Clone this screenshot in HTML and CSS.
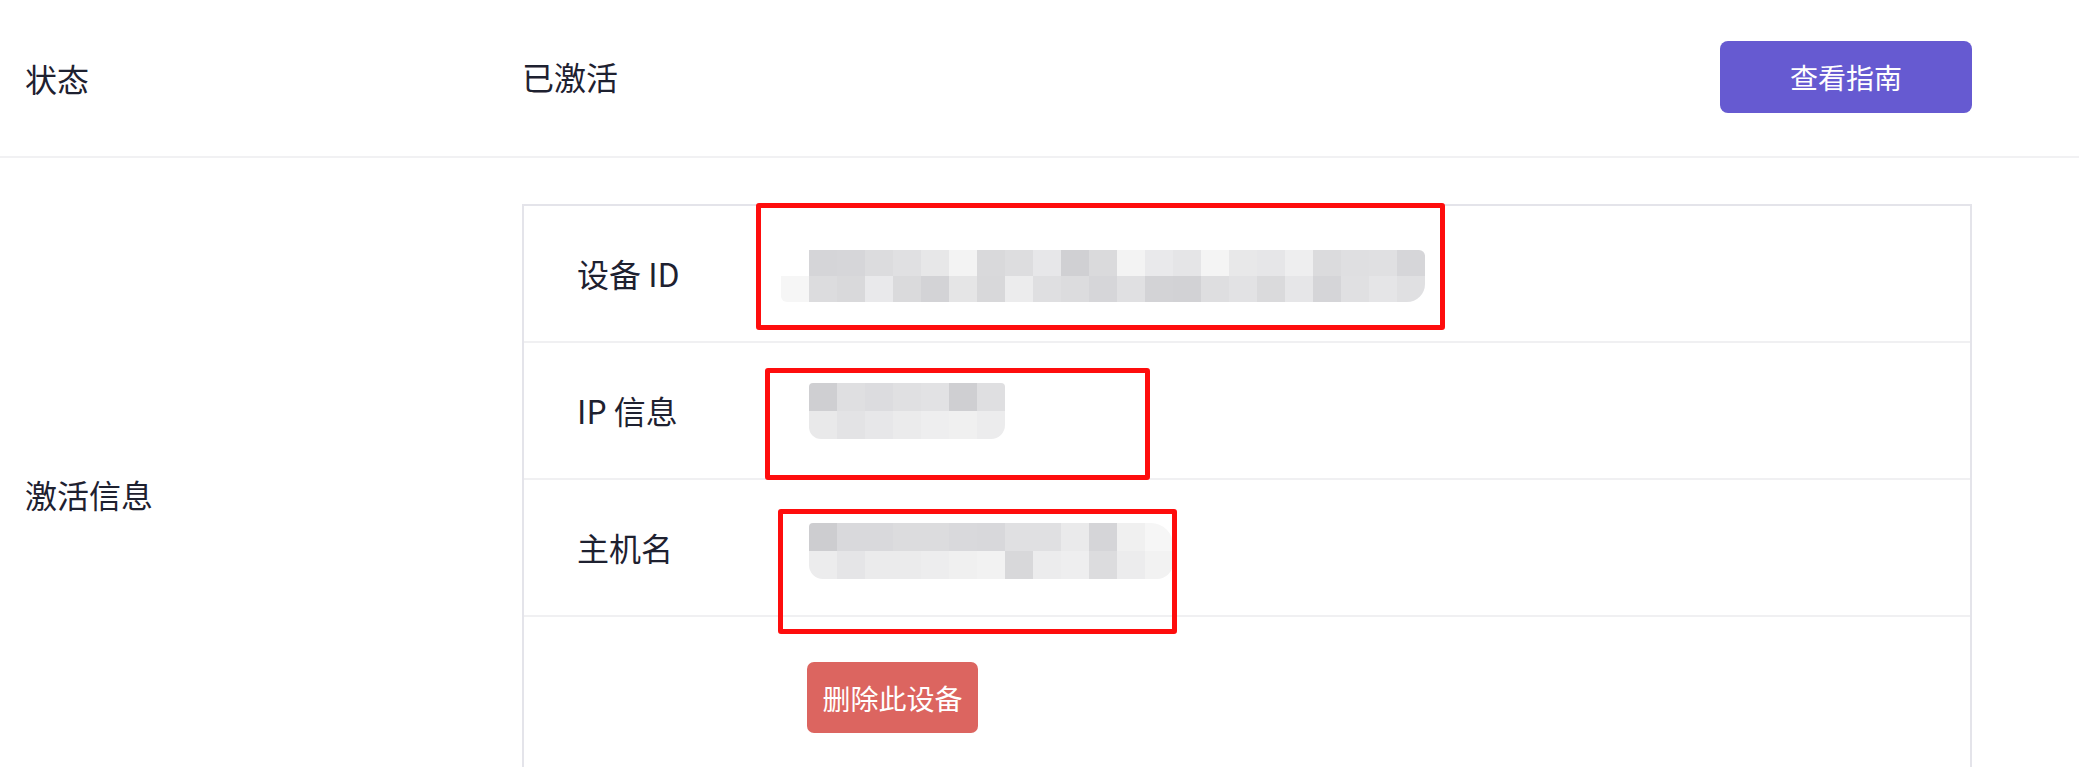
FILE: index.html
```html
<!DOCTYPE html>
<html lang="zh-CN">
<head>
<meta charset="utf-8">
<title>设备激活</title>
<link rel="stylesheet" href="styles.css">
</head>
<body>
<div class="page">
  <div class="row row-status">
    <div class="label">状态</div>
    <div class="value status-value">
      <span>已激活</span>
      <button class="btn btn-primary">查看指南</button>
    </div>
  </div>
  <div class="row row-info">
    <div class="label">激活信息</div>
    <div class="value">
      <div class="info-table">
        <div class="info-row">
          <div class="info-label">设备 ID</div>
          <div class="info-value">
            <div class="mosaic mosaic-id">
              <div class="mosaic-line">
                <i style="background:transparent"></i><i style="background:#d5d5d8"></i><i style="background:#d6d6d9"></i><i style="background:#dcdcde"></i><i style="background:#e0e0e2"></i><i style="background:#e7e7e8"></i><i style="background:#f3f3f3"></i><i style="background:#d9d9db"></i><i style="background:#dddddf"></i><i style="background:#e7e7e9"></i><i style="background:#d0d0d3"></i><i style="background:#dadadc"></i><i style="background:#f3f3f3"></i><i style="background:#e9e9eb"></i><i style="background:#e5e5e7"></i><i style="background:#f4f4f4"></i><i style="background:#e8e8e9"></i><i style="background:#e6e6e8"></i><i style="background:#eeeeef"></i><i style="background:#dbdbdd"></i><i style="background:#dfdfe1"></i><i style="background:#e0e0e2"></i><i style="background:#d6d6d9"></i>
              </div>
              <div class="mosaic-line">
                <i style="background:#f6f6f6"></i><i style="background:#dcdcde"></i><i style="background:#d9d9db"></i><i style="background:#e9e9eb"></i><i style="background:#dadadc"></i><i style="background:#d3d3d6"></i><i style="background:#e5e5e6"></i><i style="background:#d8d8da"></i><i style="background:#ececed"></i><i style="background:#dfdfe1"></i><i style="background:#dcdcde"></i><i style="background:#d6d6d9"></i><i style="background:#e0e0e2"></i><i style="background:#d3d3d6"></i><i style="background:#d2d2d5"></i><i style="background:#dedee0"></i><i style="background:#e2e2e4"></i><i style="background:#dadadc"></i><i style="background:#e6e6e8"></i><i style="background:#d5d5d8"></i><i style="background:#e0e0e2"></i><i style="background:#e5e5e7"></i><i style="background:#e0e0e2"></i>
              </div>
            </div>
          </div>
        </div>
        <div class="info-row">
          <div class="info-label">IP 信息</div>
          <div class="info-value">
            <div class="mosaic mosaic-ip">
              <div class="mosaic-line">
                <i style="background:#cfcfd2"></i><i style="background:#dfdfe1"></i><i style="background:#dcdcdf"></i><i style="background:#e0e0e2"></i><i style="background:#e2e2e4"></i><i style="background:#cfcfd2"></i><i style="background:#dfdfe1"></i>
              </div>
              <div class="mosaic-line">
                <i style="background:#e9e9ea"></i><i style="background:#e3e3e5"></i><i style="background:#e7e7e9"></i><i style="background:#ebebec"></i><i style="background:#eeeeef"></i><i style="background:#f0f0f0"></i><i style="background:#ececed"></i>
              </div>
            </div>
          </div>
        </div>
        <div class="info-row">
          <div class="info-label">主机名</div>
          <div class="info-value">
            <div class="mosaic mosaic-host">
              <div class="mosaic-line">
                <i style="background:#cdcdd0"></i><i style="background:#d9d9dc"></i><i style="background:#d9d9dc"></i><i style="background:#dcdcde"></i><i style="background:#dcdcde"></i><i style="background:#d9d9dc"></i><i style="background:#d8d8db"></i><i style="background:#e0e0e2"></i><i style="background:#e0e0e2"></i><i style="background:#eaeaeb"></i><i style="background:#d5d5d8"></i><i style="background:#f0f0f0"></i><i style="background:#f6f6f6"></i>
              </div>
              <div class="mosaic-line">
                <i style="background:#ececed"></i><i style="background:#e5e5e7"></i><i style="background:#ebebec"></i><i style="background:#ebebec"></i><i style="background:#ededee"></i><i style="background:#f0f0f0"></i><i style="background:#f2f2f2"></i><i style="background:#d8d8da"></i><i style="background:#ececed"></i><i style="background:#eeeeef"></i><i style="background:#dcdcde"></i><i style="background:#ececed"></i><i style="background:#f2f2f2"></i>
              </div>
            </div>
          </div>
        </div>
        <div class="info-row info-actions">
          <div class="info-label"></div>
          <div class="info-value">
            <button class="btn btn-danger">删除此设备</button>
          </div>
        </div>
        <div class="mark mark-id"></div>
        <div class="mark mark-ip"></div>
        <div class="mark mark-host"></div>
      </div>
    </div>
  </div>
</div>
</body>
</html>
```
FILE: styles.css
```css
* { box-sizing: border-box; }

html, body {
  margin: 0;
  padding: 0;
  background: #ffffff;
}

body {
  font-family: "Noto Sans CJK SC", "Noto Sans", sans-serif;
  font-size: 32px;
  color: #1e2130;
  overflow: hidden;
}

.page {
  width: 2079px;
}

.row {
  display: grid;
  grid-template-columns: 522px 1fr;
  padding-right: 107px;
  align-items: center;
}

.label {
  padding-left: 25px;
  line-height: 1.4;
}

.row-status {
  height: 158px;
  border-bottom: 2px solid #f1f1f3;
}

.status-value {
  display: flex;
  align-items: center;
  justify-content: space-between;
  line-height: 1.4;
  margin-top: -3px;
}

.row-info {
  padding-top: 46px;
  padding-bottom: 56px;
}

.row-info .label {
  margin-top: 4px;
}

.btn {
  border: none;
  color: #ffffff;
  font-family: "Noto Sans CJK SC", "Noto Sans", sans-serif;
  font-size: 28px;
  line-height: 1;
  cursor: pointer;
  padding: 0;
}

.btn-primary {
  width: 252px;
  height: 72px;
  background: #665ad1;
  border-radius: 8px;
}

.btn-danger {
  width: 171px;
  height: 71px;
  background: #dc6560;
  border-radius: 7px;
}

.info-table {
  position: relative;
  border: 2px solid #e4e4ea;
}

.info-row {
  display: grid;
  grid-template-columns: 283px 1fr;
  align-items: center;
  height: 137px;
  border-bottom: 2px solid #f0f0f2;
}

.info-row.info-actions {
  height: auto;
  border-bottom: none;
  padding: 45px 0;
}

.info-label {
  padding-left: 53px;
  line-height: 1.4;
}

.info-value {
  display: flex;
  align-items: center;
}

.mosaic {
  display: flex;
  flex-direction: column;
  overflow: hidden;
}

.mosaic-line {
  display: flex;
}

.mosaic-line i {
  display: block;
  width: 28px;
  height: 26px;
}

.mosaic-id {
  margin-left: -26px;
  margin-top: 4px;
  border-radius: 14px 6px 18px 6px;
}

.mosaic-ip {
  margin-left: 2px;
  border-radius: 4px 4px 14px 12px;
}

.mosaic-ip .mosaic-line i {
  height: 28px;
}

.mosaic-host {
  margin-left: 2px;
  margin-top: 6px;
  border-radius: 4px 22px 16px 14px;
}

.mosaic-host .mosaic-line i {
  height: 28px;
}

.mark {
  position: absolute;
  border: 5px solid #fe0d0d;
  border-radius: 3px;
  pointer-events: none;
}

.mark-id {
  left: 232px;
  top: -3px;
  width: 689px;
  height: 127px;
}

.mark-ip {
  left: 241px;
  top: 162px;
  width: 385px;
  height: 112px;
}

.mark-host {
  left: 254px;
  top: 303px;
  width: 399px;
  height: 125px;
}
```
